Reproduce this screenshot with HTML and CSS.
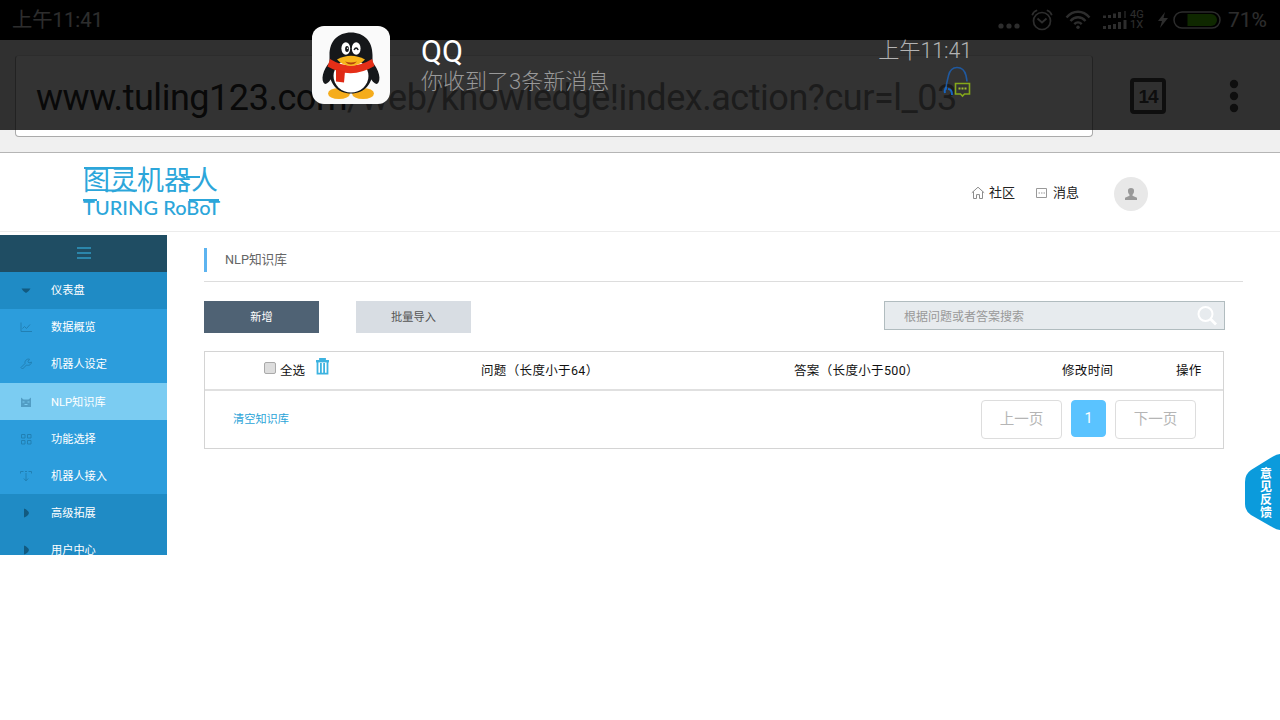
FILE: index.html
```html
<!DOCTYPE html>
<html lang="zh-CN">
<head>
<meta charset="utf-8">
<title>图灵机器人</title>
<link rel="stylesheet" href="styles.css">
</head>
<body>
<div class="screen">
  <div class="status">
    <span class="status-time">上午11:41</span>
    <div class="status-icons">
      <svg class="i-dots" width="22" height="8" viewBox="0 0 22 8" fill="#e2e2e2"><circle cx="3" cy="4" r="2.6"/><circle cx="11" cy="4" r="2.6"/><circle cx="19" cy="4" r="2.6"/></svg>
      <svg class="i-alarm" width="22" height="22" viewBox="0 0 22 22" fill="none" stroke="#e2e2e2" stroke-width="1.7"><circle cx="11" cy="12" r="8.5"/><path d="M6.5 9.5l4.5 4 4.5-4M1.2 6.2C2 3.8 3.800 2 6.200 1.300M20.800 6.200C20 3.800 18.200 2 15.800 1.300"/></svg>
      <svg class="i-wifi" width="26" height="20" viewBox="0 0 26 20" fill="none" stroke="#e2e2e2" stroke-width="2.400"><path d="M1.500 7.500C8-.2 18-.2 24.500 7.500M5.500 11C10 6 16 6 20.500 11M9.300 14.200c2.200-2.200 5.200-2.200 7.400 0"/><circle cx="13" cy="17.300" r="1.700" fill="#e2e2e2" stroke="none"/></svg>
      <svg class="i-signal" width="26" height="20" viewBox="0 0 26 20" stroke="#e2e2e2" stroke-width="3" fill="none"><path d="M2.500 8V5.500M7.500 8V5M12.500 8V3.500M17.500 8V2M2.500 19v-3M7.500 19v-4M12.500 19v-5M17.500 19v-7M23 19V10"/><path d="M23 8V1" stroke-width="1.200"/></svg>
      <span class="net"><span>4G</span><span>1X</span></span>
      <svg class="i-bolt" width="10" height="18" viewBox="0 0 10 18" fill="#e2e2e2"><path d="M7 1L0 10h4l-2 7 8-10H5.500z"/></svg>
      <svg class="i-batt" width="48" height="18" viewBox="0 0 48 18"><rect x="1" y="1" width="46" height="16" rx="8" fill="none" stroke="#ddd" stroke-width="1.500"/><path d="M14.500 3H38a6 6 0 0 1 0 12H14.500z" fill="#4cc600"/></svg>
      <span class="percent">71%</span>
    </div>
  </div>

  <div class="browser">
    <div class="omnibox"><span class="host">www.tuling123.com</span>/web/knowledge!index.action?cur=l_03</div>
    <div class="tabs">14</div>
    <svg class="more" width="10" height="34" viewBox="0 0 10 34" fill="#464646"><circle cx="5" cy="5" r="4.200"/><circle cx="5" cy="17" r="4.200"/><circle cx="5" cy="29" r="4.200"/></svg>
  </div>

  <header class="header">
    <div class="logo">
      <span class="logo-cn">图灵机器人</span>
      <span class="logo-en">TURING RoBoT</span>
      <svg class="logo-bars" width="137" height="50" viewBox="0 0 137 50" fill="none" stroke="#2ca6da" stroke-width="1.800"><path d="M1 3h49M22 25.500h32M103 12h14M0 35h14M106 35h30"/></svg>
    </div>
    <nav class="links">
      <a class="link"><svg width="14" height="14" viewBox="0 0 14 14" fill="none" stroke="#8c8c8c"><path d="M.8 6.800L7 1.200l6.200 5.600M2.500 5.500v7h3V8.600h3v3.900h3v-7"/></svg>社区</a>
      <a class="link"><svg width="14" height="14" viewBox="0 0 14 14" fill="none" stroke="#999"><path d="M1.500 2.500h10v9h-10z"/><path d="M3.500 7h7" stroke-dasharray="1.500 1"/></svg>消息</a>
    </nav>
    <div class="avatar"><svg width="12" height="12" viewBox="0 0 12 12" fill="#999"><path d="M6 0a3 3 0 0 1 3 3.300C9 5 8.200 6 7.500 6.700v1.100L12 9.800V12H0V9.800l4.500-2V6.700C3.800 6 3 5 3 3.300A3 3 0 0 1 6 0z"/></svg></div>
  </header>

  <div class="body">
    <aside class="side">
      <div class="side-top"><svg width="14" height="12" viewBox="0 0 14 12" stroke="#2b86ab" stroke-width="2"><path d="M0 1h14M0 6h14M0 11h14"/></svg></div>
      <div class="item group"><svg viewBox="0 0 12 12" fill="#125a80"><path d="M1.500 4.500h9Q9 7.500 6 9 3 7.500 1.500 4.500z"/></svg>仪表盘</div>
      <div class="item"><svg viewBox="0 0 12 12" fill="none" stroke="#2180b4"><path d="M1 1.500v9h11M2.500 7.500l2-2 2 2 3.500-4"/></svg>数据概览</div>
      <div class="item"><svg viewBox="0 0 12 12" fill="none" stroke="#2180b4"><path d="M1 9.500l4-4C4.500 3 6.500.5 9.500 1.200L8 3.500 9 5l2.500-1C11.500 6.500 9 8 6.500 7l-4 4z"/></svg>机器人设定</div>
      <div class="item active"><svg viewBox="0 0 12 12" fill="#529dc4"><path d="M1 1.500l2.500 2h5l2.500-2v9.500H1z"/><path d="M2.500 6h2M7.500 6h2M4.500 8.500h3" stroke="#7bccf2"/></svg>NLP知识库</div>
      <div class="item"><svg viewBox="0 0 12 12" fill="none" stroke="#2180b4"><path d="M1.500 1.500h3.500v3.500H1.500zM7.500 1.500H11v3.500H7.500zM1.500 7.500H5V11H1.500zM7.500 7.500H11V11H7.500z"/></svg>功能选择</div>
      <div class="item"><svg viewBox="0 0 12 12" fill="none" stroke="#2180b4"><path d="M.5 3.500v-2h3M5 1.500h2M8.500 1.500h3v2M6 3v8M3.800 8.500L6 10.800l2.200-2.300"/></svg>机器人接入</div>
      <div class="item group"><svg viewBox="0 0 12 12" fill="#125a80"><path d="M4 1.500q4 1.500 5 4.500-1 3-5 4.500z"/></svg>高级拓展</div>
      <div class="item group"><svg viewBox="0 0 12 12" fill="#125a80"><path d="M4 1.500q4 1.500 5 4.500-1 3-5 4.500z"/></svg>用户中心</div>
    </aside>

    <main class="main">
      <div class="title"><h1>NLP知识库</h1></div>
      <div class="tools">
        <button class="btn dark">新增</button>
        <button class="btn">批量导入</button>
        <div class="search"><span>根据问题或者答案搜索</span><svg width="22" height="22" viewBox="0 0 22 22" fill="none" stroke="#fff"><circle cx="9.500" cy="9" r="7" stroke-width="2"/><path d="M14.500 14l5.500 5.500" stroke-width="2.800"/></svg></div>
      </div>
      <section class="table">
        <div class="thead">
          <span class="c-all"><i class="check"></i>全选<svg width="13" height="17" viewBox="0 0 13 17" fill="none" stroke="#3db3e0" stroke-width="1.800"><path d="M4 2.200V1h5v1.200" /><path d="M0 3.200h13" stroke-width="2.400"/><path d="M1.500 4v11.600h10V4M4.900 5v10M8.100 5v10"/></svg></span>
          <span class="c-q">问题<b lang="zh-TW">（</b>长度小于64<b lang="zh-TW">）</b></span>
          <span class="c-a">答案<b lang="zh-TW">（</b>长度小于500<b lang="zh-TW">）</b></span>
          <span class="c-t">修改时间</span>
          <span class="c-o">操作</span>
        </div>
        <div class="tfoot">
          <a class="clear">清空知识库</a>
          <div class="pager"><span class="pg">上一页</span><span class="pg on">1</span><span class="pg">下一页</span></div>
        </div>
      </section>
    </main>
  </div>

  <div class="feedback">
    <svg width="36" height="76" viewBox="0 0 36 76"><path d="M36 0Q32 0 28 2.500L6 16Q0 20 0 28V50Q0 57 6 61L28 73.500Q32 76 36 76z" fill="#0b9bdc"/></svg>
    <span>意见反馈</span>
  </div>

  <div class="notice">
    <svg class="qq" width="78" height="78" viewBox="0 0 78 78">
      <rect width="78" height="78" rx="12" fill="#fafafa"/>
      <ellipse cx="27" cy="67.500" rx="11" ry="5.500" fill="#f5ac1c"/><ellipse cx="51" cy="67.500" rx="11" ry="5.500" fill="#f5ac1c"/>
      <path d="M18 36C11 43 8 55 13 58c3 0 5-4 8-7zM60 36c7 7 10 19 5 22-3 0-5-4-8-7z" fill="#15171a"/>
      <path d="M39 6.500C26 6.500 17.500 15 17.500 29v9C15 58 26 67.500 39 67.500S63 58 60.500 38v-9C60.500 15 52 6.500 39 6.500z" fill="#15171a"/>
      <ellipse cx="39" cy="50" rx="17.500" ry="16.500" fill="#fff"/>
      <path d="M18 33q21 13 42 0l2.500 7Q39 54 15.500 40.500z" fill="#e52f18"/>
      <path d="M24 43l9 2.500-1 11-8-1z" fill="#df2a16"/>
      <ellipse cx="33.800" cy="22.500" rx="4.400" ry="6.200" fill="#fff"/><ellipse cx="44.200" cy="22.500" rx="4.400" ry="6.200" fill="#fff"/>
      <ellipse cx="35" cy="23" rx="1.900" ry="3" fill="#15171a"/><circle cx="35.500" cy="22.300" r=".7" fill="#fff"/>
      <path d="M42 24q2.200-4 4.200 0" fill="none" stroke="#15171a" stroke-width="1.400"/>
      <path d="M25 33.500q14-7.500 28 0-6 6.500-14 6.500t-14-6.500z" fill="#f7b51c"/><path d="M33 35.500q6 2 12 0-2.500 3-6 3t-6-3z" fill="#b4410e"/>
    </svg>
    <div class="msg"><strong>QQ</strong><p>你收到了3条新消息</p></div>
    <div class="meta">
      <span>上午11:41</span>
      <svg width="28" height="32" viewBox="0 0 28 32" fill="none"><path d="M3 24C3 16 5 13 5.500 9.500 7 3.500 10 1.500 14 1.500s7.500 2 9 8c.5 2.500.8 4 1 6" stroke="#20599f" stroke-width="1.600"/><path d="M3.500 21q-2.500 2.500-1.500 6M5 23q4 0 4 6" stroke="#1765c0" stroke-width="2"/><path d="M12.500 17.500h14v10.500h-5l-2 2-2-2h-5z" stroke="#85a91b" stroke-width="1.600"/><path d="M15.500 22.500h8" stroke="#9fbd2e" stroke-width="2" stroke-dasharray="2 1"/></svg>
    </div>
  </div>
</div>
</body>
</html>
```
FILE: styles.css
```css
* { box-sizing: border-box; }
body { margin: 0; background: #fff; font-family: Roboto, "Noto Sans CJK SC", sans-serif; }
svg { display: block; flex: none; }
.screen { position: relative; width: 1280px; height: 720px; overflow: hidden; }

.status { height: 40px; background: #000; color: #e2e2e2; display: flex; justify-content: space-between; align-items: center; padding: 0 12px 0 12px; }
.status-time { font-size: 20.300px; line-height: 40px; }
.status-icons { display: flex; align-items: center; }
.i-dots { margin: 11px 11px 0 0; }
.i-alarm { margin-right: 12px; }
.i-wifi { margin-right: 11px; }
.i-signal { margin-right: 2px; }
.net { display: flex; flex-direction: column; font-size: 11px; line-height: 10px; width: 17px; margin-right: 11px; }
.i-bolt { margin-right: 5px; }
.i-batt { margin-right: 7px; }
.percent { font-size: 21px; width: 40px; }

.browser { height: 113px; background: #f0f0f0; border-bottom: 1px solid #b5b5b5; display: flex; align-items: flex-start; padding: 15px 0 0 15px; }
.omnibox { width: 1078px; height: 82px; background: #fff; border: 1px solid #aaa; border-top-color: #ddd; border-radius: 4px; padding-left: 20px; font-size: 36px; line-height: 84px; color: #8c8c8c; white-space: nowrap; letter-spacing: -.46px; }
.host { color: #2d2d2d; }
.tabs { width: 36px; height: 36px; margin: 23px 0 0 37px; border: 4px solid #464646; border-radius: 4px; color: #464646; font: 700 19px/29px "Liberation Sans", sans-serif; letter-spacing: -1px; text-align: center; }
.more { margin: 24px 0 0 63px; }

.header { height: 79px; border-bottom: 1px solid #ececec; display: flex; padding-left: 83px; }
.logo { position: relative; width: 137px; height: 50px; margin-top: 12px; color: #2ca6da; display: flex; flex-direction: column; white-space: nowrap; }
.logo-cn { font: 400 27px/27px "Noto Sans CJK SC", sans-serif; }
.logo-en { font: 500 20px/20px Lato, sans-serif; margin-top: 5px; letter-spacing: .05px; }
.logo-bars { position: absolute; left: 0; top: 0; }
.links { display: flex; gap: 20px; margin: 31px 0 0 751px; height: 18px; }
.link { display: flex; align-items: center; gap: 4px; font-size: 13px; line-height: 18px; color: #222; }
.avatar { width: 34px; height: 34px; border-radius: 50%; background: #e8e8e8; margin: 24px 0 0 35px; display: flex; align-items: center; justify-content: center; }

.body { display: flex; align-items: flex-start; padding-top: 3px; }
.side { width: 167px; height: 320px; overflow: hidden; background: #2c9ddc; }
.side-top { height: 36.600px; background: #1f4d63; display: flex; align-items: center; justify-content: center; }
.item { height: 37.150px; display: flex; align-items: center; padding: 0 0 2px 20px; gap: 19px; font-size: 11.200px; color: #fff; }
.item svg { width: 12px; height: 12px; margin-top: 2px; }
.group { background: #1f8bc5; }
.active { background: #7bccf2; }

.main { margin-left: 37px; width: 1039px; padding-top: 13px; }
.title { height: 34px; border-bottom: 1px solid #ddd; }
.title h1 { margin: 0; height: 24px; border-left: 3px solid #5db4f0; padding-left: 18px; font-size: 12.700px; line-height: 23px; font-weight: 400; color: #666; }
.tools { display: flex; align-items: flex-start; margin-top: 19px; width: 1020.500px; }
.btn { width: 115px; height: 32px; margin: 0 37px 0 0; padding: 0 0 3px; border: 0; background: #d8dde3; color: #555; font: 11.200px Roboto, "Noto Sans CJK SC", sans-serif; }
.btn.dark { background: #4f6274; color: #fff; }
.search { margin-left: auto; width: 340.500px; height: 29px; background: #e7ebee; border: 1px solid #b1bcbf; display: flex; align-items: center; justify-content: space-between; padding: 0 6px 0 19px; font-size: 12px; color: #999; }
.table { width: 1020px; margin-top: 18px; border: 1px solid #d4d4d4; height: 98px; }
.thead { height: 39px; border-bottom: 2px solid #e0e0e0; display: flex; font-size: 12.500px; line-height: 38px; color: #111; white-space: nowrap; letter-spacing: .35px; }
.thead b { font-family: "Noto Sans CJK TC", sans-serif; font-weight: 400; line-height: 1; }
.c-all { display: flex; align-items: center; width: 276px; padding-left: 59px; letter-spacing: 0; }
.c-all svg { margin: -8px 0 0 11px; }
.check { width: 12px; height: 12px; border: 1px solid #aaa; border-radius: 2px; background: #ddd; margin: -5px 4px 0 0; }
.c-q { width: 313px; }
.c-a { width: 268px; }
.c-t { width: 114px; }
.tfoot { display: flex; justify-content: space-between; padding: 9px 27px 0 28px; }
.clear { font-size: 11.200px; line-height: 39px; color: #2ba4d8; }
.pager { display: flex; gap: 9px; align-items: flex-start; }
.pg { width: 81px; height: 39px; border: 1px solid #ddd; border-radius: 4px; text-align: center; font-size: 14.500px; line-height: 37px; color: #b5b5b5; }
.pg.on { width: 35px; height: 37px; background: #5ac3ff; border-color: #5ac3ff; color: #fff; line-height: 35px; }

.feedback { position: absolute; left: 1245px; top: 454px; width: 36px; height: 76px; }
.feedback span { position: absolute; left: 15px; top: 14px; width: 12px; font-size: 12px; line-height: 13px; font-weight: 700; color: #fff; word-break: break-all; }

.notice { position: absolute; left: 0; top: 0; width: 1280px; height: 130px; background: rgba(0, 0, 0, .8); display: flex; align-items: flex-start; padding: 26px 308px 0 312px; }
.msg { margin: 9px 0 0 31px; }
.msg strong { display: block; font-size: 30.500px; line-height: 34px; font-weight: 400; color: #fff; }
.msg p { margin: 0; font-size: 22px; line-height: 26px; font-weight: 300; color: #999; }
.meta { margin-left: auto; display: flex; flex-direction: column; align-items: flex-end; font-size: 21.200px; line-height: 24px; font-weight: 300; color: #b4b4b4; padding-top: 13px; }
.meta svg { margin: 3px 1px 0 0; }
```
